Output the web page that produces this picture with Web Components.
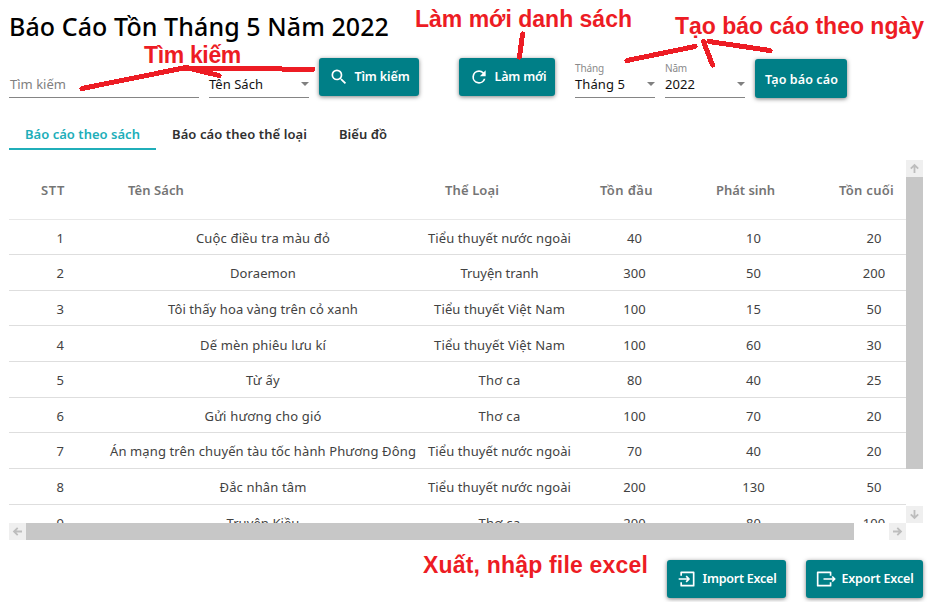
<!DOCTYPE html>
<html lang="vi"><head><meta charset="utf-8"><title>Báo cáo tồn</title>
<style>html,body{margin:0;background:#fff;overflow:hidden}body{font-family:"Noto Sans","Open Sans",sans-serif;width:932px;height:602px}</style></head>
<body><report-page></report-page>
<script>
// Inline text whose tracking is adjusted so that it spans the width in "w".
customElements.define('fit-text', class extends HTMLElement{
  connectedCallback(){
    if(this.shadowRoot) return;
    this.attachShadow({mode:'open'}).innerHTML='<style>:host{display:inline-block;white-space:pre;line-height:inherit}span{display:inline-block}</style><span></span>';
    const s=this.shadowRoot.querySelector('span');
    s.textContent=this.getAttribute('text');
    const w=+this.getAttribute('w');
    if(w){const n=[...s.textContent].length,d=(w-s.getBoundingClientRect().width)/n;
      s.style.letterSpacing=d.toFixed(3)+'px';}
  }
});
const T=(t,w)=>`<fit-text text="${t}" w="${w||''}"></fit-text>`;
const ICONS={
 search:'<path fill="currentColor" d="M15.5 14h-.79l-.28-.27A6.47 6.47 0 0 0 16 9.5 6.5 6.5 0 1 0 9.5 16c1.61 0 3.09-.59 4.23-1.57l.27.28v.79l5 4.99L20.49 19l-4.99-5zm-6 0C7.01 14 5 11.99 5 9.5S7.01 5 9.5 5 14 7.01 14 9.5 11.99 14 9.5 14z"/>',
 refresh:'<path fill="currentColor" d="M17.65 6.35A7.96 7.96 0 0 0 12 4a8 8 0 1 0 7.73 10h-2.08A6 6 0 1 1 12 6c1.66 0 3.14.69 4.22 1.78L13 11h7V4l-2.35 2.35z"/>',
 import:'<path fill="none" stroke="currentColor" stroke-width="2" stroke-linejoin="round" d="M5 8V4h15v16H5v-4M2 12h12M11 8.500l3.500 3.500-3.500 3.500"/>',
 export:'<path fill="none" stroke="currentColor" stroke-width="2" stroke-linejoin="round" d="M17.500 8V4H2v16h15.500v-4M9 12h13M19.500 9l3 3-3 3"/>'
};
customElements.define('action-button', class extends HTMLElement{
  connectedCallback(){
    const i=this.getAttribute('icon');
    this.attachShadow({mode:'open'}).innerHTML=`<style>:host{display:flex;box-sizing:border-box;height:38px;align-items:center;background:#007f87;color:#fff;border-radius:3px;box-shadow:0 1px 4px rgba(0,0,0,.5);font-size:12.500px;font-weight:600;line-height:18px;padding-left:10px;flex:none}svg{width:20px;height:20px;flex:none;margin-right:5.500px}.l{margin-top:-1px}:host([plain]) .l{margin-top:2px}</style>${i?`<svg viewBox="0 0 24 24">${ICONS[i]}</svg>`:''}<span class="l"><slot></slot></span>`;
  }
});
customElements.define('line-field', class extends HTMLElement{
  connectedCallback(){
    const l=this.getAttribute('label');
    this.attachShadow({mode:'open'}).innerHTML=`<style>:host{display:flex;flex-direction:column;justify-content:flex-end;box-sizing:border-box;height:38px;border-bottom:1px solid #858585;font-size:13px;flex:none}.lab{font-size:10px;line-height:12px;color:#8a8a8a}.v{display:flex;justify-content:space-between;align-items:center;height:20px;line-height:20px;padding:0 0 3px;color:#111}:host([muted]) .v{color:#808080;padding-left:1px}svg{width:8px;height:4px}</style>${l?`<div class="lab">${T(l,this.getAttribute('lw'))}</div>`:''}<div class="v"><slot></slot>${this.hasAttribute('muted')?'':'<svg viewBox="0 0 8 4"><path d="M0 0h8L4 4z" fill="#808080"/></svg>'}</div>`;
  }
});
customElements.define('tab-item', class extends HTMLElement{
  connectedCallback(){
    this.attachShadow({mode:'open'}).innerHTML='<style>:host{display:block;box-sizing:border-box;height:32px;padding:6px 16px 0;font-size:13px;font-weight:600;line-height:20px;color:#303030;border-bottom:2px solid transparent}:host([active]){color:#20aeb9;border-color:#20aeb9}</style><slot></slot>';
  }
});
customElements.define('scroll-bar', class extends HTMLElement{
  connectedCallback(){
    const a=r=>`<b><svg viewBox="0 0 17 17" style="transform:rotate(${r}deg)"><path d="M8.500 13V5M4.800 8.700l3.700-3.700 3.700 3.700" fill="none" stroke="#bdbdbd" stroke-width="1.800"/></svg></b>`;
    const v=this.hasAttribute('vertical');
    this.attachShadow({mode:'open'}).innerHTML=`<style>:host{display:flex;background:#fff;flex-direction:${v?'column':'row'}}b{width:17px;height:17px;background:#efefef;flex:none}svg{display:block;width:17px;height:17px}i{background:#c7c7c7;flex:0 0 ${this.getAttribute('thumb')}px}u{flex:1}</style>${a(v?0:-90)}<i></i><u></u>${a(v?180:90)}`;
  }
});
customElements.define('stock-table', class extends HTMLElement{
  connectedCallback(){
    const ng=['Tiểu thuyết nước ngoài',143],vn=['Tiểu thuyết Việt Nam',131],tc=['Thơ ca',42];
    const rows=[
     [35,'Cuộc điều tra màu đỏ',134,ng,40,10,20],[36,'Doraemon',66,['Truyện tranh',78],300,50,200],
     [35,'Tôi thấy hoa vàng trên cỏ xanh',190,vn,100,15,50],[36,'Dế mèn phiêu lưu kí',126,vn,100,60,30],
     [36,'Từ ấy',34,tc,80,40,25],[35,'Gửi hương cho gió',117,tc,100,70,20],
     [36,'Án mạng trên chuyến tàu tốc hành Phương Đông',306,ng,70,40,20],[36,'Đắc nhân tâm',87,ng,200,130,50],
     [36,'Truyện Kiều',73,tc,200,80,100]];
    const n=x=>T(x,String(x).length*7.45);
    this.attachShadow({mode:'open'}).innerHTML=`<style>
:host{display:grid;grid-template:363px 17px/897px 17px;font-size:13px;color:#424242}
.view{overflow:hidden}
.row{display:grid;grid-template-columns:95px 318px 155px 115px 123px 118px;width:924px;box-sizing:border-box;border-bottom:1px solid #dedede;line-height:20px;text-align:center}
.row>div{padding-top:8px;white-space:nowrap}.row>div:first-child{text-align:right;padding-right:40px}
.row:nth-child(5)>div{padding-top:9px}
.head{height:60px;border-color:#e8e8e8;color:#757575;font-weight:600;text-align:left}
.row.head>div:first-child{padding-right:39px}
.head>div{padding-top:20px}.head>div:nth-child(n+2){padding-left:24px}.head>div:nth-child(3){padding-left:23px}.head>div:nth-child(4){padding-left:23px}
</style><div class="view"><div class="row head">${[['STT',24],['Tên Sách',56],['Thể Loại',54],['Tồn đầu',53],['Phát sinh',59],['Tồn cuối',55]].map(h=>`<div>${T(...h)}</div>`).join('')}</div>
${rows.map((r,i)=>`<div class="row" style="height:${r[0]}px"><div>${n(i+1)}</div><div>${T(r[1],r[2])}</div><div>${T(...r[3])}</div><div>${n(r[4])}</div><div>${n(r[5])}</div><div>${n(r[6])}</div></div>`).join('')}</div>
<scroll-bar vertical thumb="292"></scroll-bar><scroll-bar thumb="828"></scroll-bar>`;
  }
});
// Red hand-made notes lying over the page.
customElements.define('note-layer', class extends HTMLElement{
  connectedCallback(){
    const N=(x,y,t,w)=>`<div style="left:${x}px;top:${y}px">${T(t,w)}</div>`;
    this.attachShadow({mode:'open'}).innerHTML=`<style>:host{position:absolute;inset:0;pointer-events:none;font:bold 23px/28px "Liberation Sans",Arial,sans-serif;color:#ed1c24}div{position:absolute;white-space:nowrap}svg{position:absolute;inset:0}</style>
<svg width="932" height="602" fill="none" stroke="#ed1c24" stroke-width="5" stroke-linecap="round" stroke-linejoin="round" shape-rendering="crispEdges"><path d="M82 88.500L186 67.500L219 75.500M186 67.500L204 71M186 68.500H250L313 69.500M522.500 34L519.500 57M627 60.500L695 46.500M703.500 41.500L712.500 65M709 41.500L770 50.500"/></svg>
${N(144,41,'Tìm kiếm',97)}${N(415,5,'Làm mới danh sách',217)}${N(675,12,'Tạo báo cáo theo ngày',249)}${N(423,551,'Xuất, nhập file excel',225)}`;
  }
});
customElements.define('report-page', class extends HTMLElement{
  connectedCallback(){
    this.attachShadow({mode:'open'}).innerHTML=`<style>
:host{display:block;position:relative;width:932px;height:602px;box-sizing:border-box;padding:8px 9px 0;overflow:hidden}
h1{margin:0;height:50px;font-size:25px;font-weight:500;line-height:36px;color:#000}
.tools{display:flex;align-items:flex-start;height:60px}
.tools line-field{margin-top:2px}
.tabs{display:flex;height:42px}
.foot{display:flex;justify-content:flex-end;gap:20px;padding-top:20px}
</style>
<h1>${T('Báo Cáo Tồn Tháng 5 Năm 2022',380)}</h1>
<div class="tools">
<line-field muted style="width:190px">${T('Tìm kiếm',56)}</line-field>
<line-field style="width:100px;margin-left:10px">${T('Tên Sách',54)}</line-field>
<action-button icon="search" style="width:100px;margin-left:10px">${T('Tìm kiếm',55)}</action-button>
<action-button icon="refresh" style="width:96px;margin-left:40px">${T('Làm mới',52)}</action-button>
<line-field label="Tháng" lw="29" style="width:80px;margin-left:20px">${T('Tháng 5',50)}</line-field>
<line-field label="Năm" lw="22" style="width:80px;margin-left:10px">${T('2022',30)}</line-field>
<action-button plain style="width:92px;height:39px;margin:1px 0 0 10px">${T('Tạo báo cáo',73)}</action-button>
</div>
<div class="tabs"><tab-item active>${T('Báo cáo theo sách',115)}</tab-item><tab-item>${T('Báo cáo theo thể loại',135)}</tab-item><tab-item>${T('Biểu đồ',48)}</tab-item></div>
<stock-table></stock-table>
<div class="foot"><action-button icon="import" style="width:119px">${T('Import Excel',74)}</action-button><action-button icon="export" style="width:117px">${T('Export Excel',72)}</action-button></div>
<note-layer></note-layer>`;
  }
});
</script></body></html>
